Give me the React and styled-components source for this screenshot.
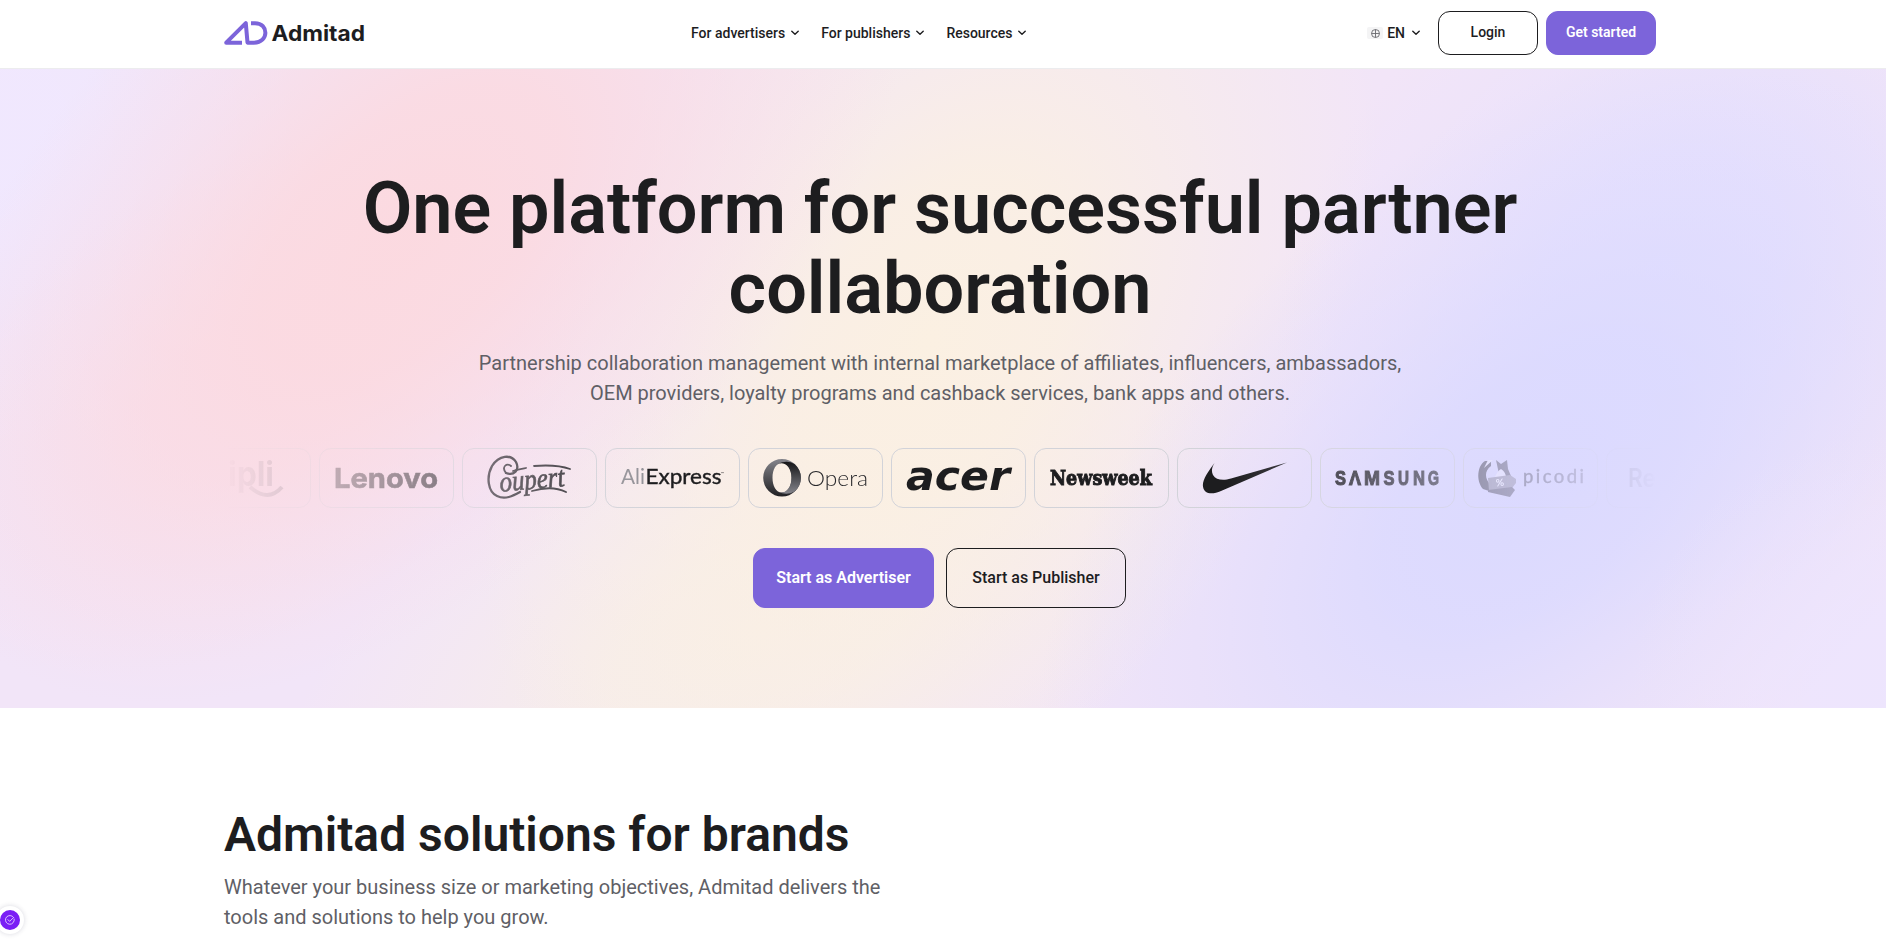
import React from "react";
import styled, { createGlobalStyle } from "styled-components";

const GlobalStyle = createGlobalStyle`
  *, *::before, *::after { box-sizing: border-box; }
  html, body { margin: 0; padding: 0; }
  body {
    height: 941px;
    overflow: hidden;
    background: #fff;
    color: #1d1d1f;
    font-family: Roboto, "Liberation Sans", sans-serif;
  }
  h1, h2, p { margin: 0; }
`;

const Page = styled.div`
  height: 941px;
  overflow: hidden;
`;

const Header = styled.header`
  height: 69px;
  border-bottom: 1px solid #ececee;
  padding-right: 6px;
  background: #fff;
`;

const Container = styled.div`
  width: 1432px;
  margin: 0 auto;
`;

const HeaderRow = styled(Container)`
  height: 66px;
  display: grid;
  grid-template-columns: 467px 1fr auto;
  align-items: center;
`;

const Logo = styled.svg`
  display: block;
  overflow: visible;
`;

const Nav = styled.nav`
  display: flex;
  gap: 22px;
  padding-bottom: 1px;
`;

const NavItem = styled.a`
  display: flex;
  align-items: center;
  gap: 6px;
  font-size: 14px;
  line-height: 20px;
  font-weight: 500;
  white-space: nowrap;

  svg { margin-top: 1px; }
`;

const Actions = styled.div`
  display: flex;
  align-items: center;
`;

const Language = styled.div`
  display: flex;
  align-items: center;
  margin-right: 18px;
  padding-bottom: 1px;
  font-size: 14px;
  line-height: 20px;
  font-weight: 500;
`;

const GlobeBox = styled.span`
  display: grid;
  place-items: center;
  width: 16px;
  height: 12px;
  margin: 1px 4px 0 0;
  border-radius: 2px;
  background: #f4f4f5;
`;

const LanguageCode = styled.span`
  margin-right: 7px;
`;

const Button = styled.button`
  width: ${(p) => p.$width}px;
  height: ${(p) => (p.$large ? 60 : 44)}px;
  padding: 0 0 2px;
  border: 1px solid ${(p) => (p.$primary ? "#7c64da" : "#1d1d1f")};
  border-radius: 12px;
  background: ${(p) => (p.$primary ? "#7c64da" : "transparent")};
  color: ${(p) => (p.$primary ? "#fff" : "#1d1d1f")};
  font-family: inherit;
  font-size: ${(p) => (p.$large ? 16 : 14)}px;
  font-weight: ${(p) => (p.$primary ? 600 : 500)};
`;

const HeaderButtons = styled.div`
  display: flex;
  gap: 8px;
`;

const Hero = styled.section`
  position: relative;
  height: 639px;
  padding: 100px 6px 0 0;
  overflow: hidden;
  background: #f2e5f8;
`;

const HeroBackdrop = styled.svg`
  position: absolute;
  inset: 0;
  width: 100%;
  height: 100%;
`;

const HeroContent = styled(Container)`
  position: relative;
  display: flex;
  flex-direction: column;
  align-items: center;
`;

const HeroTitle = styled.h1`
  width: 1200px;
  text-align: center;
  font-size: 72px;
  line-height: 80px;
  font-weight: 600;
`;

const Lead = styled.p`
  font-size: 20px;
  line-height: 30px;
  color: #5f5f66;
  text-align: ${(p) => (p.$center ? "center" : "left")};
  white-space: nowrap;
`;

const HeroLead = styled(Lead)`
  margin-top: 19px;
`;

const BrandStrip = styled.div`
  width: 1432px;
  margin-top: 40px;
  overflow: hidden;
  mask-image: linear-gradient(90deg, transparent, #000 30%, #000 70%, transparent);
`;

const BrandTrack = styled.div`
  display: flex;
  gap: 8px;
  margin-left: -48px;
`;

const BrandCard = styled.div`
  flex: 0 0 135px;
  height: 60px;
  border: 1px solid #d2d3d9;
  border-radius: 12px;
`;

const BrandMark = styled.svg`
  display: block;
  width: 133px;
  height: 58px;
`;

const CtaRow = styled.div`
  display: flex;
  gap: 12px;
  margin: 40px 0 0 -1px;
`;

const Solutions = styled.section`
  padding: 98px 6px 0 0;
`;

const SectionTitle = styled.h2`
  margin-bottom: 8px;
  font-size: 48px;
  line-height: 58px;
  font-weight: 600;
`;

const ConsentBadge = styled.button`
  position: fixed;
  left: -4px;
  bottom: 7px;
  display: grid;
  place-items: center;
  width: 28px;
  height: 28px;
  padding: 0;
  border: 4px solid #fff;
  border-radius: 50%;
  background: #7a1ff5;
  box-shadow: 0 0 5px rgba(40, 40, 80, 0.18);
`;

const Chevron = () => (
  <svg width="8" height="6" viewBox="0 0 8 6" fill="none">
    <path d="M.8 1.2 4 4.2 7.2 1.2" stroke="#1d1d1f" strokeWidth="1.4" strokeLinecap="round" strokeLinejoin="round" />
  </svg>
);

const AdmitadLogo = () => (
  <Logo width="142" height="26" viewBox="0 0 142 26">
    <g fill="none" stroke="#7c64da" strokeWidth="4" strokeLinejoin="round">
      <path d="M18 22.7H2.2L21.8 3.2 23.5 22.7H30C45 22.7 45 3.2 31 3.2H27" />
    </g>
    <text x="47.5" y="21.4" fontFamily="Inter" fontWeight="700" fontSize="21.5" textLength="93.5" lengthAdjust="spacingAndGlyphs" fill="#1d1d1f">Admitad</text>
  </Logo>
);

const blobs = [
  { id: "lilacEdge", cx: -20, cy: 60, rx: 330, ry: 330, rot: 0, color: "#f0e8ff", alpha: 0.9 },
  { id: "creamLow", cx: 760, cy: 560, rx: 520, ry: 260, rot: -25, color: "#f8efe6", alpha: 0.9 },
  { id: "cream", cx: 930, cy: 270, rx: 600, ry: 380, rot: -58, color: "#fbf0e2", alpha: 1 },
  { id: "pinkLow", cx: 250, cy: 330, rx: 380, ry: 230, rot: -30, color: "#fbdce5", alpha: 0.6 },
  { id: "pink", cx: 410, cy: 160, rx: 600, ry: 340, rot: -42, color: "#fcd9df", alpha: 0.95 },
  { id: "lavenderTop", cx: 1660, cy: 200, rx: 420, ry: 330, rot: -40, color: "#e3dfff", alpha: 0.8 },
  { id: "lavender", cx: 1530, cy: 420, rx: 590, ry: 340, rot: -42, color: "#dad9ff", alpha: 0.95 },
  { id: "lilacCorner", cx: 1890, cy: 620, rx: 260, ry: 260, rot: 0, color: "#ece5ff", alpha: 0.8 },
];

const Backdrop = () => (
  <HeroBackdrop viewBox="0 0 1886 638" preserveAspectRatio="none">
    <defs>
      {blobs.map((b) => (
        <radialGradient key={b.id} id={b.id} gradientUnits="userSpaceOnUse" cx="0" cy="0" r="1"
          gradientTransform={`translate(${b.cx} ${b.cy}) rotate(${b.rot}) scale(${b.rx} ${b.ry})`}>
          <stop offset="0" stopColor={b.color} stopOpacity={b.alpha} />
          <stop offset=".3" stopColor={b.color} stopOpacity={b.alpha * 0.86} />
          <stop offset=".65" stopColor={b.color} stopOpacity={b.alpha * 0.38} />
          <stop offset="1" stopColor={b.color} stopOpacity="0" />
        </radialGradient>
      ))}
    </defs>
    {blobs.map((b) => (
      <rect key={b.id} width="1886" height="638" fill={`url(#${b.id})`} />
    ))}
  </HeroBackdrop>
);

const ink = "#1d1d1f";
const fit = "spacingAndGlyphs";

const brands = [
  {
    name: "Tripli",
    art: (
      <g fill="#55555a">
        <text x="51" y="37" fontFamily="Inter" fontWeight="700" fontSize="34" textLength="46" lengthAdjust={fit}>ipli</text>
        <path d="M73 38Q91 54 105 38" fill="none" stroke="#55555a" strokeWidth="4" />
      </g>
    ),
  },
  {
    name: "Lenovo",
    art: <text x="14" y="39" fontFamily="Inter" fontWeight="700" fontSize="27.5" textLength="104" lengthAdjust={fit} fill={ink} stroke={ink} strokeWidth=".6">Lenovo</text>,
  },
  {
    name: "Coupert",
    art: (
      <g fill="none" stroke="#252529" strokeWidth="1.8" strokeLinecap="round">
        <path d="M43 24C51 27 57 21 53 13C48 5 36 6 29 17C23 28 25 43 34 47C42 51 50 47 57 43" strokeWidth="2.3" />
        <path d="M43 24C38 18 44 13 48 17M50 22C55 20 59 20 63 19M71 17C84 16 96 16 107 20M69 42Q89 36 103 43" />
        <text x="37" y="40" fontFamily="Liberation Serif" fontStyle="italic" fontSize="29" textLength="65" lengthAdjust={fit} fill="#252529" strokeWidth=".7" transform="rotate(-5 68 38)">oupert</text>
      </g>
    ),
  },
  {
    name: "AliExpress",
    art: (
      <g fontFamily="Lato" fontSize="21.5">
        <text x="15" y="35" textLength="24" lengthAdjust={fit} fill="#929197">Ali</text>
        <text x="39.5" y="35" textLength="76" lengthAdjust={fit} fill={ink} stroke={ink} strokeWidth=".4">Express</text>
        <text x="115" y="26" fontSize="4" fill={ink}>™</text>
      </g>
    ),
  },
  {
    name: "Opera",
    art: (
      <g>
        <defs>
          <linearGradient id="operaOuter" x1="0" y1="0" x2="0" y2="1">
            <stop stopColor="#85858c" /><stop offset="1" stopColor="#202023" />
          </linearGradient>
          <linearGradient id="operaInner" x1="0" y1="0" x2="0" y2="1">
            <stop stopColor="#151517" /><stop offset="1" stopColor="#85858c" />
          </linearGradient>
        </defs>
        <path fillRule="evenodd" fill="url(#operaOuter)" d="M33 10a18.8 18.8 0 1 0 0 37.6a18.8 18.8 0 1 0 0-37.6ZM33 14c6 0 9.5 6.5 9.5 14.8s-3.500 14.800-9.500 14.800s-9.500-6.500-9.500-14.800S27 14 33 14Z" />
        <path fill="url(#operaInner)" d="M29 14.800Q38 10.500 45.500 15Q52 21 52 28.800Q52 37 45.500 42.500Q38 47 29 42.800C36 46 42.500 39 42.500 28.800S36 12 29 14.800Z" />
        <text x="58" y="37" fontFamily="Lato" fontWeight="300" fontSize="22" textLength="61" lengthAdjust={fit} fill="#29292c">Opera</text>
      </g>
    ),
  },
  {
    name: "Acer",
    art: <text x="14" y="41" fontFamily="DejaVu Sans" fontStyle="italic" fontWeight="700" fontSize="41" textLength="104" lengthAdjust={fit} fill={ink}>acer</text>,
  },
  {
    name: "Newsweek",
    art: <text x="15" y="35.500" fontFamily="DejaVu Serif" fontWeight="700" fontSize="20" textLength="102" lengthAdjust={fit} fill={ink} stroke={ink} strokeWidth="1">Newsweek</text>,
  },
  {
    name: "Nike",
    art: <path fill={ink} d="M36.500 14C30 23 24 31 25 37.500C26 45 34 46 43 42L109 13.500L53 29.500C45 32 38 31 35 26C33 22 34 18 36.500 14Z" />,
  },
  {
    name: "Samsung",
    art: (
      <g fontFamily="Liberation Sans" fontWeight="700" fontSize="21" fill={ink} stroke={ink} strokeWidth="1.1">
        {["S", "Λ", "M", "S", "U", "N", "G"].map((letter, i) => (
          <text key={i} x={[14, 28, 43, 62.5, 77, 92, 107][i]} y="36" textLength={[11, 12, 16, 11, 11, 12, 11][i]} lengthAdjust={fit}>{letter}</text>
        ))}
      </g>
    ),
  },
  {
    name: "Picodi",
    art: (
      <g>
        <path fill="#3d3c45" d="M21 12C13 17 12 32 19 40L28 43L26 35C21 30 20 22 27 17L27 12Z" />
        <path fill="#4b4955" d="M32 11L37 15L43 11L44 20L47 27L43 34H29L35 25Z" />
        <path fill="#f3f1ff" d="M24 11L29 11L20 19ZM37 20C32 23 29 31 32 34H40C43 30 43 24 37 20Z" />
        <path fill="#888592" d="M24 29L46 26L52 30V34L48 39L25 42Z" />
        <path fill="#4b4955" d="M24 41L48 38L51 41L46 48L24 43Z" />
        <text x="32" y="37" fontFamily="Lato" fontWeight="700" fontSize="10" fill="#fff" transform="rotate(-6 37 34)">%</text>
        <text x="59" y="33.500" fontFamily="Lato" fontSize="18.500" textLength="61" fill="#3d3c45" stroke="#3d3c45" strokeWidth=".4">picodi</text>
      </g>
    ),
  },
  {
    name: "Reserved",
    art: <text x="21" y="38" fontFamily="Inter" fontWeight="600" fontSize="25" textLength="28" lengthAdjust={fit} fill={ink}>Re</text>,
  },
];

const navItems = ["For advertisers", "For publishers", "Resources"];

export default function App() {
  return (
    <Page>
      <GlobalStyle />
      <Header>
        <HeaderRow>
          <AdmitadLogo />
          <Nav>
            {navItems.map((item) => (
              <NavItem key={item}>{item}<Chevron /></NavItem>
            ))}
          </Nav>
          <Actions>
            <Language>
              <GlobeBox>
                <svg width="9" height="9" viewBox="0 0 9 9" fill="none" stroke="#69696e" strokeWidth=".9">
                  <circle cx="4.500" cy="4.500" r="4" /><path d="M4.500 .5v8M.5 4.500h8" />
                </svg>
              </GlobeBox>
              <LanguageCode>EN</LanguageCode>
              <Chevron />
            </Language>
            <HeaderButtons>
              <Button $width={100}>Login</Button>
              <Button $width={110} $primary>Get started</Button>
            </HeaderButtons>
          </Actions>
        </HeaderRow>
      </Header>

      <Hero>
        <Backdrop />
        <HeroContent>
          <HeroTitle>One platform for successful partner collaboration</HeroTitle>
          <HeroLead $center>
            Partnership collaboration management with internal marketplace of affiliates, influencers, ambassadors,<br />
            OEM providers, loyalty programs and cashback services, bank apps and others.
          </HeroLead>
          <BrandStrip>
            <BrandTrack>
              {brands.map((brand) => (
                <BrandCard key={brand.name}>
                  <BrandMark viewBox="0 0 133 58">{brand.art}</BrandMark>
                </BrandCard>
              ))}
            </BrandTrack>
          </BrandStrip>
          <CtaRow>
            <Button $width={181} $large $primary>Start as Advertiser</Button>
            <Button $width={180} $large>Start as Publisher</Button>
          </CtaRow>
        </HeroContent>
      </Hero>

      <Solutions>
        <Container>
          <SectionTitle>Admitad solutions for brands</SectionTitle>
          <Lead>
            Whatever your business size or marketing objectives, Admitad delivers the<br />
            tools and solutions to help you grow.
          </Lead>
        </Container>
      </Solutions>

      <ConsentBadge aria-label="Consent settings">
        <svg width="10" height="10" viewBox="0 0 10 10" fill="none" stroke="#e5d2ff" strokeWidth=".9" strokeLinecap="round">
          <path d="M9.200 4A4.400 4.400 0 1 1 7.600 1.400M3 4.700 4.700 6.400 8.800 2.300" />
        </svg>
      </ConsentBadge>
    </Page>
  );
}
